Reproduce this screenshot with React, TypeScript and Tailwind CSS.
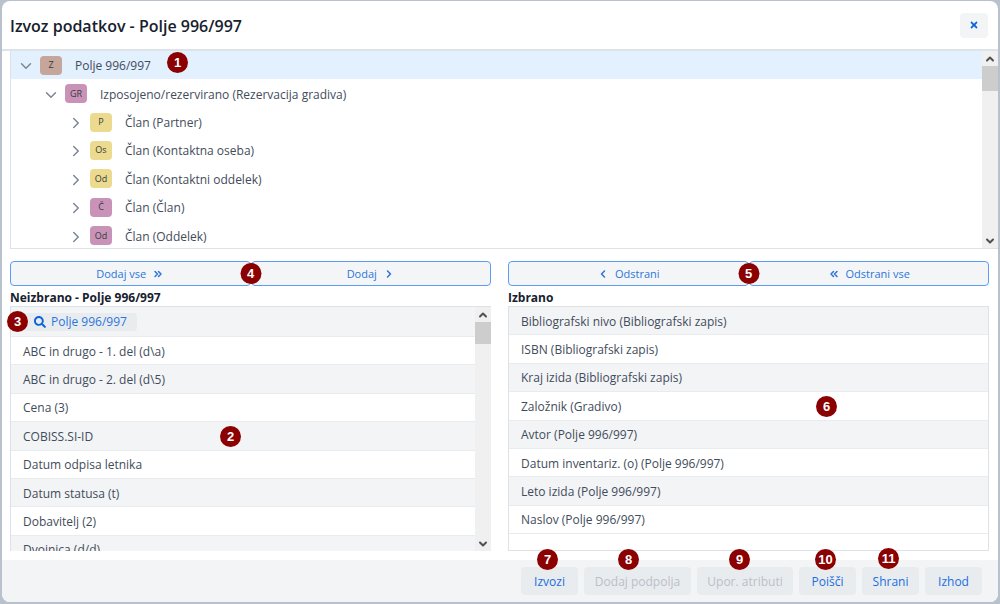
import { clsx } from 'clsx';
import { FaSearch, FaTimes } from 'react-icons/fa';
import { ChevronDown, ChevronLeft, ChevronRight, ChevronUp, ChevronsLeft, ChevronsRight } from 'lucide-react';

type TreeItem = {
  code: string;
  label: string;
  indent: string;
  color: string;
  open?: boolean;
  selected?: boolean;
};

const tree: TreeItem[] = [
  { code: 'Z', label: 'Polje 996/997', indent: 'pl-2', color: 'bg-[#c6a59b]', open: true, selected: true },
  { code: 'GR', label: 'Izposojeno/rezervirano (Rezervacija gradiva)', indent: 'pl-[33px]', color: 'bg-[#c993b8]', open: true },
  { code: 'P', label: 'Član (Partner)', indent: 'pl-[58px]', color: 'bg-[#ecda8f]' },
  { code: 'Os', label: 'Član (Kontaktna oseba)', indent: 'pl-[58px]', color: 'bg-[#ecda8f]' },
  { code: 'Od', label: 'Član (Kontaktni oddelek)', indent: 'pl-[58px]', color: 'bg-[#ecda8f]' },
  { code: 'Č', label: 'Član (Član)', indent: 'pl-[58px]', color: 'bg-[#c993b8]' },
  { code: 'Od', label: 'Član (Oddelek)', indent: 'pl-[58px]', color: 'bg-[#c993b8]' },
];

const available = [
  'ABC in drugo - 1. del (d\\a)',
  'ABC in drugo - 2. del (d\\5)',
  'Cena (3)',
  'COBISS.SI-ID',
  'Datum odpisa letnika',
  'Datum statusa (t)',
  'Dobavitelj (2)',
  'Dvojnica (d/d)',
];

const chosen = [
  'Bibliografski nivo (Bibliografski zapis)',
  'ISBN (Bibliografski zapis)',
  'Kraj izida (Bibliografski zapis)',
  'Založnik (Gradivo)',
  'Avtor (Polje 996/997)',
  'Datum inventariz. (o) (Polje 996/997)',
  'Leto izida (Polje 996/997)',
  'Naslov (Polje 996/997)',
];

const actions = [
  { label: 'Izvozi', width: 'w-[57px]', marker: 7, markerPos: 'left-4 -top-[18px]' },
  { label: 'Dodaj podpolja', width: 'w-[107px]', marker: 8, markerPos: 'left-[34px] -top-[18px]', disabled: true },
  { label: 'Upor. atributi', width: 'w-24', marker: 9, markerPos: 'left-8 -top-[18px]', disabled: true },
  { label: 'Poišči', width: 'w-[57px]', marker: 10, markerPos: 'left-4 -top-[18px]' },
  { label: 'Shrani', width: 'w-[57px]', marker: 11, markerPos: 'left-4 -top-[19px]' },
  { label: 'Izhod', width: 'w-[57px]' },
];

function Marker({ n, className }: { n: number; className: string }) {
  return (
    <span
      className={clsx(
        'absolute z-10 flex h-[21px] w-[21px] items-center justify-center rounded-full bg-[#8b0000] font-["Liberation_Sans",sans-serif] text-[13px] leading-none font-bold text-white',
        className,
      )}
    >
      {n}
    </span>
  );
}

function Scrollbar({ thumb }: { thumb: string }) {
  return (
    <div className="flex w-4 shrink-0 flex-col items-center bg-[#f0f0f0] text-[#505050]">
      <div className="flex h-[15px] items-center">
        <ChevronUp size={12} strokeWidth={4} />
      </div>
      <div className={clsx('w-full bg-[#cdcdcd]', thumb)} />
      <div className="mt-auto flex h-[15px] items-center">
        <ChevronDown size={12} strokeWidth={4} />
      </div>
    </div>
  );
}

function Tree() {
  return (
    <div className="ml-2 flex h-[198px] overflow-hidden border-b border-l border-[#dee2e6]">
      <ul className="flex h-[199px] flex-1 flex-col">
        {tree.map((item, i) => (
          <li key={i} className={clsx('relative flex flex-1 items-center', item.indent, item.selected && 'bg-[#e3f0fe]')}>
            <button type="button" aria-label={item.label} aria-expanded={!!item.open} className="flex w-[13px] justify-center pt-[2px] text-[#7b8794]">
              {item.open ? <ChevronDown size={18} className="shrink-0" /> : <ChevronRight size={18} className="shrink-0" />}
            </button>
            <span className={clsx('ml-2 flex h-[19px] w-[22px] items-center justify-center rounded text-[9px] text-[#343a40]', item.color)}>
              {item.code}
            </span>
            <span className="ml-[13px] pt-[2px]">{item.label}</span>
            {item.selected && <Marker n={1} className="left-[156px] top-px" />}
          </li>
        ))}
      </ul>
      <Scrollbar thumb="h-[25px]" />
    </div>
  );
}

function TransferButton({ label, icon, before }: { label: string; icon: React.ReactNode; before?: boolean }) {
  return (
    <button
      type="button"
      className="flex h-[25px] flex-1 items-center justify-center gap-[6px] rounded border border-[#5b9cf5] bg-[#f4f5f7] pt-px text-[11px] text-[#2a75dc]"
    >
      {before && icon}
      <span>{label}</span>
      {!before && icon}
    </button>
  );
}

function ListRows({ items, firstShaded }: { items: string[]; firstShaded: boolean }) {
  return (
    <ul className="flex h-[227px] shrink-0 flex-col">
      {items.map((item, i) => (
        <li
          key={item}
          className={clsx('flex flex-1 items-center border-b border-[#e9ecef] pt-[2px] pl-3', (i % 2 === 0) === firstShaded && 'bg-[#f3f4f6]')}
        >
          {item}
        </li>
      ))}
    </ul>
  );
}

export default function App() {
  return (
    <div className="bg-[#b9c1cd] px-[2px] pt-px pb-[2px] font-['Open_Sans','Noto_Sans',sans-serif] text-xs text-[#3f4c5a]">
      <main className="overflow-hidden rounded-lg bg-white">
        <header className="flex h-[50px] items-center justify-between border-b-2 border-[#dee2e9] pr-[10px] pl-2">
          <h1 className="pt-[2px] text-base font-semibold text-[#17212e]">Izvoz podatkov - Polje 996/997</h1>
          <button type="button" aria-label="Zapri" className="flex h-[25px] w-7 items-center justify-center rounded bg-[#f3f4f6] text-[#0b63d8]">
            <FaTimes size={10} />
          </button>
        </header>

        <Tree />

        <div className="flex gap-[17px] pt-3 pr-[9px] pb-[9px] pl-2">
          <section className="relative min-w-0 flex-1">
            <div className="flex">
              <TransferButton label="Dodaj vse" icon={<ChevronsRight size={12} strokeWidth={3} />} />
              <TransferButton label="Dodaj" icon={<ChevronRight size={12} strokeWidth={3} />} />
            </div>
            <Marker n={4} className="top-[2px] left-1/2 -translate-x-1/2" />
            <h2 className="h-5 pt-[3px] leading-[18px] font-bold text-[#17212e]">Neizbrano - Polje 996/997</h2>
            <div className="relative">
              <div className="flex h-[245px] overflow-hidden border-t border-l border-[#dee2e6]">
                <div className="flex min-w-0 flex-1 flex-col">
                  <div className="flex h-[30px] shrink-0 items-center border-b border-[#e9ecef] bg-[#f3f4f6] pl-3">
                    <button type="button" className="flex h-[18px] items-center gap-[5px] rounded bg-[#e9ecef] pr-[10px] pl-[11px] text-[#2a75dc]">
                      <FaSearch size={12} className="text-[#0b63d8]" />
                      Polje 996/997
                    </button>
                  </div>
                  <ListRows items={available} firstShaded={false} />
                </div>
                <Scrollbar thumb="h-[22px]" />
              </div>
              <Marker n={3} className="top-[5px] -left-[3px]" />
              <Marker n={2} className="top-[120px] left-[210px]" />
            </div>
          </section>

          <section className="relative min-w-0 flex-1">
            <div className="flex">
              <TransferButton before label="Odstrani" icon={<ChevronLeft size={12} strokeWidth={3} />} />
              <TransferButton before label="Odstrani vse" icon={<ChevronsLeft size={12} strokeWidth={3} />} />
            </div>
            <Marker n={5} className="top-[2px] left-1/2 -translate-x-1/2" />
            <h2 className="h-5 pt-[3px] leading-[18px] font-bold text-[#17212e]">Izbrano</h2>
            <div className="relative h-[245px] border border-[#dee2e6]">
              <ListRows items={chosen} firstShaded />
              <Marker n={6} className="top-[89px] left-[307px]" />
            </div>
          </section>
        </div>

        <footer className="flex h-[42px] items-center justify-end gap-[6px] bg-[#f3f4f6] pr-4">
          {actions.map((action) => (
            <div key={action.label} className="relative">
              <button
                type="button"
                disabled={action.disabled}
                className={clsx('block h-7 rounded bg-[#e9ecef] pt-px text-xs', action.width, action.disabled ? 'text-[#b9c0c8]' : 'text-[#1a6fe0]')}
              >
                {action.label}
              </button>
              {action.marker && <Marker n={action.marker} className={action.markerPos} />}
            </div>
          ))}
        </footer>
      </main>
    </div>
  );
}
